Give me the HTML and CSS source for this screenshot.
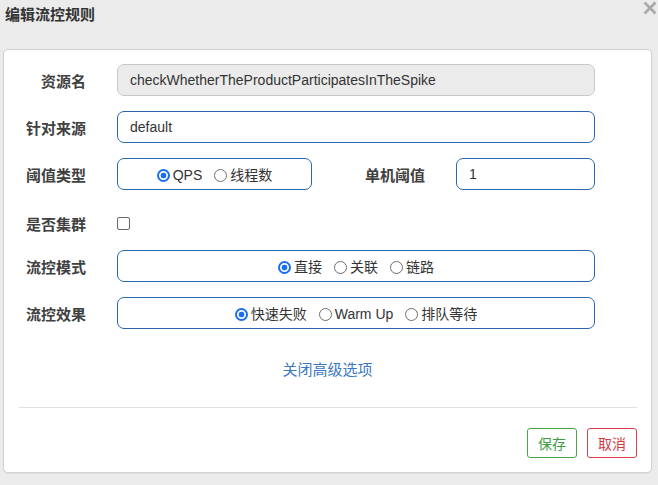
FILE: index.html
```html
<!DOCTYPE html>
<html lang="zh">
<head>
<meta charset="utf-8">
<title>编辑流控规则</title>
<link rel="stylesheet" href="styles.css">
</head>
<body>
<div class="dialog">
  <div class="header">
    <h3 class="title">编辑流控规则</h3>
    <span class="close" aria-label="close">
      <svg width="14" height="14" viewBox="0 0 14 14"><path d="M1.5 1.5 L12.5 12.5 M12.5 1.5 L1.5 12.5" stroke="#a9a9a9" stroke-width="2.6" stroke-linecap="butt"/></svg>
    </span>
  </div>
  <div class="card">
    <div class="form">
      <div class="row">
        <label class="label">资源名</label>
        <div class="input disabled wide">checkWhetherTheProductParticipatesInTheSpike</div>
      </div>
      <div class="row">
        <label class="label">针对来源</label>
        <div class="input wide">default</div>
      </div>
      <div class="row">
        <label class="label">阈值类型</label>
        <div class="box narrow">
          <label class="opt"><input type="radio" name="grade" checked>QPS</label>
          <label class="opt"><input type="radio" name="grade">线程数</label>
        </div>
        <label class="label label2">单机阈值</label>
        <div class="input small">1</div>
      </div>
      <div class="row row-check">
        <label class="label">是否集群</label>
        <input type="checkbox" class="check">
      </div>
      <div class="row">
        <label class="label">流控模式</label>
        <div class="box wide">
          <label class="opt"><input type="radio" name="mode" checked>直接</label>
          <label class="opt"><input type="radio" name="mode">关联</label>
          <label class="opt"><input type="radio" name="mode">链路</label>
        </div>
      </div>
      <div class="row">
        <label class="label">流控效果</label>
        <div class="box wide">
          <label class="opt"><input type="radio" name="effect" checked>快速失败</label>
          <label class="opt"><input type="radio" name="effect">Warm Up</label>
          <label class="opt"><input type="radio" name="effect">排队等待</label>
        </div>
      </div>
      <div class="link-row"><a class="link">关闭高级选项</a></div>
    </div>
    <div class="divider"></div>
    <div class="footer">
      <button class="btn btn-save">保存</button>
      <button class="btn btn-cancel">取消</button>
    </div>
  </div>
</div>
</body>
</html>
```
FILE: styles.css
```css
html, body {
  margin: 0;
  padding: 0;
  background: #ebebeb;
  font-family: "Liberation Sans", "Noto Sans CJK SC", sans-serif;
  color: #333;
}
.dialog {
  width: 658px;
  height: 485px;
}
.header {
  display: flex;
  justify-content: space-between;
  align-items: flex-start;
  height: 49px;
}
.title {
  margin: 5px 0 0 5px;
  font-size: 15px;
  line-height: 20px;
  font-weight: bold;
  color: #333;
}
.close {
  display: block;
  margin: 1px 1px 0 0;
  width: 14px;
  height: 14px;
}
.close svg { display: block; }
.card {
  margin-left: 3px;
  width: 647px;
  height: 422px;
  background: #fff;
  border: 1px solid #d2d2d2;
  border-radius: 5px;
  box-shadow: 0 1px 1px rgba(0,0,0,0.06);
}
.form {
  padding-top: 14px;
}
.row {
  display: flex;
  align-items: center;
  height: 32px;
  margin-bottom: 15px;
}
.label {
  width: 82px;
  text-align: right;
  font-size: 15px;
  font-weight: bold;
  color: #404040;
  margin-right: 31px;
  flex: none;
}
.label2 {
  width: 113px;
}
.input {
  box-sizing: border-box;
  height: 32px;
  border: 1px solid #2b65ab;
  border-radius: 7px;
  padding: 0 12px;
  font-size: 14px;
  line-height: 30px;
  color: #333;
  background: #fff;
}
.input.disabled {
  background: #ebebeb;
  border-color: #c9c9c9;
}
.wide { width: 478px; }
.narrow { width: 195px; }
.small { width: 139px; }
.box {
  box-sizing: border-box;
  height: 32px;
  border: 1px solid #2b65ab;
  border-radius: 7px;
  display: flex;
  justify-content: center;
  align-items: center;
  gap: 12px;
  font-size: 14px;
  color: #333;
  padding-top: 2px;
}
.opt {
  display: flex;
  align-items: center;
  gap: 3px;
  line-height: 20px;
}
.opt input {
  appearance: none;
  -webkit-appearance: none;
  box-sizing: border-box;
  width: 13px;
  height: 13px;
  margin: 0;
  border: 1px solid #6f6f6f;
  border-radius: 50%;
  background: #fff;
}
.opt input:checked {
  border: 2px solid #1a6ef0;
  background: radial-gradient(circle, #1a6ef0 0 2.6px, #fff 3.2px);
}
.row-check {
  height: 30px;
  padding-top: 7px;
  box-sizing: border-box;
  margin-bottom: 15px;
}
.check {
  appearance: none;
  -webkit-appearance: none;
  box-sizing: border-box;
  width: 13px;
  height: 13px;
  margin: 0;
  border: 1px solid #6a6a6a;
  border-radius: 2px;
  background: #fff;
}
.link-row {
  text-align: center;
  padding-top: 16px;
  height: 20px;
}
.link {
  font-size: 15px;
  line-height: 20px;
  color: #3a78c3;
  text-decoration: none;
}
.divider {
  margin: 27px 14px 0 15px;
  height: 1px;
  background: #e1e1e1;
}
.footer {
  display: flex;
  justify-content: flex-end;
  gap: 10px;
  padding: 20px 14px 0 0;
}
.btn {
  box-sizing: border-box;
  width: 50px;
  height: 30px;
  background: #fff;
  border-radius: 3px;
  font-family: "Liberation Sans", "Noto Sans CJK SC", sans-serif;
  font-size: 14px;
  padding: 0;
}
.btn-save {
  border: 1px solid #4aa54a;
  color: #3f9b3f;
}
.btn-cancel {
  border: 1px solid #d9404a;
  color: #d43a44;
}
```
